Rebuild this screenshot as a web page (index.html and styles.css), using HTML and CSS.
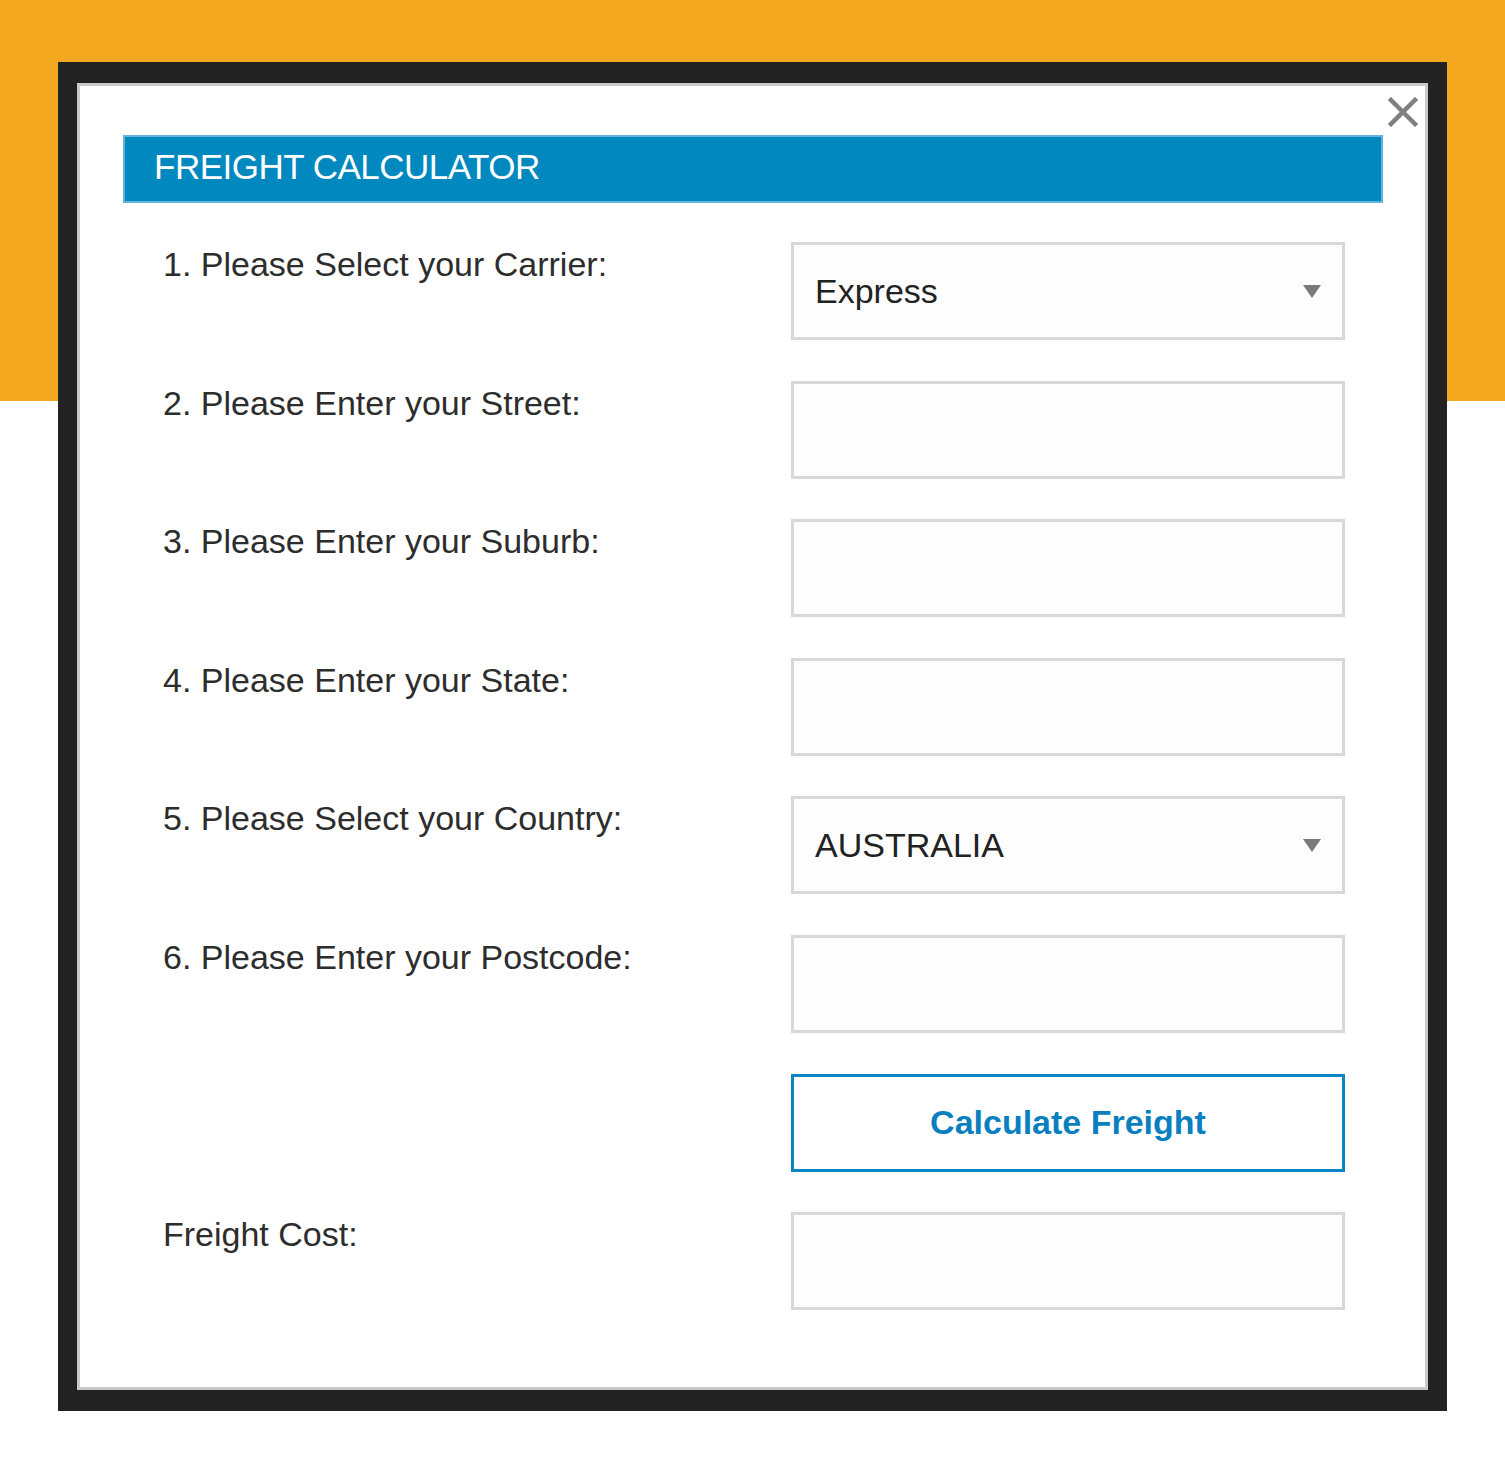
FILE: index.html
```html
<!DOCTYPE html>
<html>
<head>
<meta charset="utf-8">
<title>Freight Calculator</title>
<link rel="stylesheet" href="styles.css">
</head>
<body>

<div class="frame">
  <div class="panel">
    <a class="close" href="#" title="Close">
      <svg width="30" height="30" viewBox="0 0 30 30"><path d="M3 3 L27 27 M27 3 L3 27" stroke="#808080" stroke-width="4.5" stroke-linecap="square"/></svg>
    </a>

    <div class="title">FREIGHT CALCULATOR</div>

    <form name="FreightForm" class="calc" onsubmit="return false">
      <label class="lbl">1. Please Select your Carrier:</label>
      <div class="pick">
        <select name="carrier" class="fld">
          <option>Express</option>
          <option>Standard</option>
        </select>
        <svg class="arrow" width="18" height="13" viewBox="0 0 18 13"><polygon points="0,0 18,0 9,13" fill="#7a7a7a"/></svg>
      </div>

      <label class="lbl">2. Please Enter your Street:</label>
      <input class="fld" type="text" name="street">

      <label class="lbl">3. Please Enter your Suburb:</label>
      <input class="fld" type="text" name="suburb">

      <label class="lbl">4. Please Enter your State:</label>
      <input class="fld" type="text" name="state">

      <label class="lbl">5. Please Select your Country:</label>
      <div class="pick">
        <select name="country" class="fld">
          <option>AUSTRALIA</option>
          <option>NEW ZEALAND</option>
        </select>
        <svg class="arrow" width="18" height="13" viewBox="0 0 18 13"><polygon points="0,0 18,0 9,13" fill="#7a7a7a"/></svg>
      </div>

      <label class="lbl">6. Please Enter your Postcode:</label>
      <input class="fld" type="text" name="postcode">

      <span></span>
      <button class="calc-btn" type="button">Calculate Freight</button>

      <label class="lbl">Freight Cost:</label>
      <input class="fld" type="text" name="cost" readonly>
    </form>
  </div>
</div>

</body>
</html>
```

FILE: styles.css
```css
html {background: #fff linear-gradient(#f4a81f, #f4a81f) no-repeat 0 0 / 100% 401px;}
body {margin: 0; padding: 0; font-family: "Liberation Sans", Arial, sans-serif;}

.frame {box-sizing: border-box; width: 1389px; margin: 62px 0 65px 58px; border-style: solid; border-color: #222; border-width: 21px 19px 21px 19px; background: #222;}
.panel {position: relative; background: #fff; border: 3px solid #c9c9c9; padding: 49px 42px 77px 43px;}

.close {position: absolute; top: 11px; right: 7px; width: 30px; height: 30px; display: block;}
.close svg {display: block;}

.title {height: 68px; box-sizing: border-box; border: 2px solid #62b4dc; background: #0088bf; color: #fff; font-size: 35px; line-height: 60px; padding: 0 0 4px 29px; letter-spacing: -0.5px;}

.calc {display: grid; grid-template-columns: 628px 554px; grid-auto-rows: 98px; row-gap: 40.6px; margin-top: 39px; padding-left: 40px;}
.lbl {font-size: 34px; line-height: 44px; color: #2d2d2d; white-space: nowrap;}

.fld {box-sizing: border-box; width: 100%; height: 98px; margin: 0; border: 3px solid #d8d8d8; background: #fdfdfd; font-family: "Liberation Sans", Arial, sans-serif; font-size: 34px; color: #222; padding: 0 21px; outline: none; border-radius: 0;}
select.fld {appearance: none; -webkit-appearance: none;}

.pick {position: relative;}
.arrow {position: absolute; top: 43px; right: 24px; pointer-events: none;}

.calc-btn {box-sizing: border-box; width: 100%; height: 98px; margin: 0; border: 3px solid #0a86c2; background: #fff; color: #0a7fc0; font-family: "Liberation Sans", Arial, sans-serif; font-weight: bold; font-size: 34px; cursor: pointer; padding: 0;}
```
